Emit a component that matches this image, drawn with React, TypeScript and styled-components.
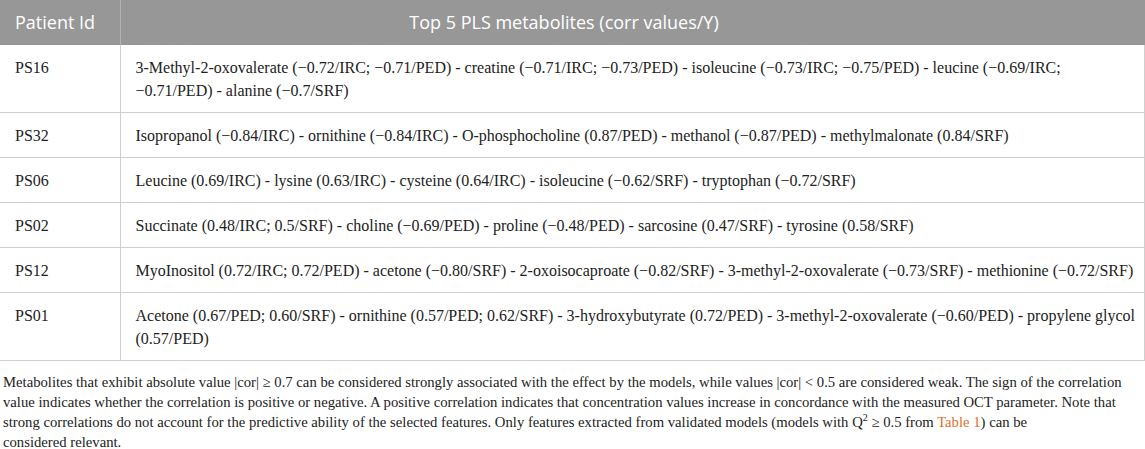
import styled, { createGlobalStyle } from "styled-components";

const GlobalStyle = createGlobalStyle`
  html, body {
    margin: 0;
    padding: 0;
    background: #ffffff;
  }
`;

const Wrapper = styled.div`
  width: 1145px;
  background: #ffffff;
`;

const Table = styled.table`
  width: 100%;
  border-collapse: collapse;
  table-layout: fixed;
`;

const HeadCell = styled.th<{ $center?: boolean }>`
  background: #979797;
  color: #ffffff;
  font-family: "Open Sans", "Liberation Sans", sans-serif;
  font-weight: 400;
  font-size: 18px;
  line-height: 23px;
  height: 45px;
  padding: 0 15px;
  text-align: ${(p) => (p.$center ? "center" : "left")};
  padding-right: ${(p) => (p.$center ? "152px" : "15px")};
  border-left: 1px solid #b3b3b3;
  box-sizing: border-box;
  &:first-child {
    border-left: none;
  }
`;

const Row = styled.tr`
  border-bottom: 1px solid #cfcfcf;
`;

const Cell = styled.td`
  font-family: "Liberation Serif", "Times New Roman", serif;
  font-size: 16px;
  line-height: 23px;
  color: #222222;
  padding: 11px 6px 10px 15px;
  vertical-align: top;
  border-left: 1px solid #cfcfcf;
  border-right: 1px solid #cfcfcf;
  &:first-child {
    border-left: none;
  }
`;

const Note = styled.p`
  margin: 11px 0 0;
  padding: 0 0 0 3px;
  font-family: "Liberation Serif", "Times New Roman", serif;
  font-size: 14.7px;
  line-height: 20px;
  color: #222222;
`;

const Sup = styled.sup`
  font-size: 10px;
  line-height: 0;
`;

const Link = styled.span`
  color: #e0701e;
`;

const NoWrap = styled.span`
  white-space: nowrap;
`;

const rows = [
  [
    "PS16",
    "3-Methyl-2-oxovalerate (\u22120.72/IRC; \u22120.71/PED) - creatine (\u22120.71/IRC; \u22120.73/PED) - isoleucine (\u22120.73/IRC; \u22120.75/PED) - leucine (\u22120.69/IRC; \u22120.71/PED) - alanine (\u22120.7/SRF)",
  ],
  [
    "PS32",
    "Isopropanol (\u22120.84/IRC) - ornithine (\u22120.84/IRC) - O-phosphocholine (0.87/PED) - methanol (\u22120.87/PED) - methylmalonate (0.84/SRF)",
  ],
  [
    "PS06",
    "Leucine (0.69/IRC) - lysine (0.63/IRC) - cysteine (0.64/IRC) - isoleucine (\u22120.62/SRF) - tryptophan (\u22120.72/SRF)",
  ],
  [
    "PS02",
    "Succinate (0.48/IRC; 0.5/SRF) - choline (\u22120.69/PED) - proline (\u22120.48/PED) - sarcosine (0.47/SRF) - tyrosine (0.58/SRF)",
  ],
  [
    "PS12",
    "MyoInositol (0.72/IRC; 0.72/PED) - acetone (\u22120.80/SRF) - 2-oxoisocaproate (\u22120.82/SRF) - 3-methyl-2-oxovalerate (\u22120.73/SRF) - methionine (\u22120.72/SRF)",
  ],
  [
    "PS01",
    "Acetone (0.67/PED; 0.60/SRF) - ornithine (0.57/PED; 0.62/SRF) - 3-hydroxybutyrate (0.72/PED) - 3-methyl-2-oxovalerate (\u22120.60/PED) - propylene glycol (0.57/PED)",
  ],
];

export default function App() {
  return (
    <Wrapper>
      <GlobalStyle />
      <Table>
        <colgroup>
          <col style={{ width: 120 }} />
          <col />
        </colgroup>
        <thead>
          <tr>
            <HeadCell>Patient Id</HeadCell>
            <HeadCell $center>Top 5 PLS metabolites (corr values/Y)</HeadCell>
          </tr>
        </thead>
        <tbody>
          {rows.map(([id, text]) => (
            <Row key={id}>
              <Cell>{id}</Cell>
              <Cell>{text}</Cell>
            </Row>
          ))}
        </tbody>
      </Table>
      <Note>
        Metabolites that exhibit absolute value |cor| ≥ 0.7 can be considered strongly associated with the
        effect by the models, while values |cor| &lt; 0.5 are considered weak. The sign of the correlation
        value indicates whether the correlation is positive or negative. A positive correlation indicates that
        concentration values increase in concordance with the measured OCT parameter. Note that strong
        correlations do not account for the predictive ability of the selected features. Only features
        extracted from validated models (models with Q<Sup>2</Sup> ≥ 0.5 from <Link>Table 1</Link>) can be{" "}
        <NoWrap>considered relevant.</NoWrap>
      </Note>
    </Wrapper>
  );
}
